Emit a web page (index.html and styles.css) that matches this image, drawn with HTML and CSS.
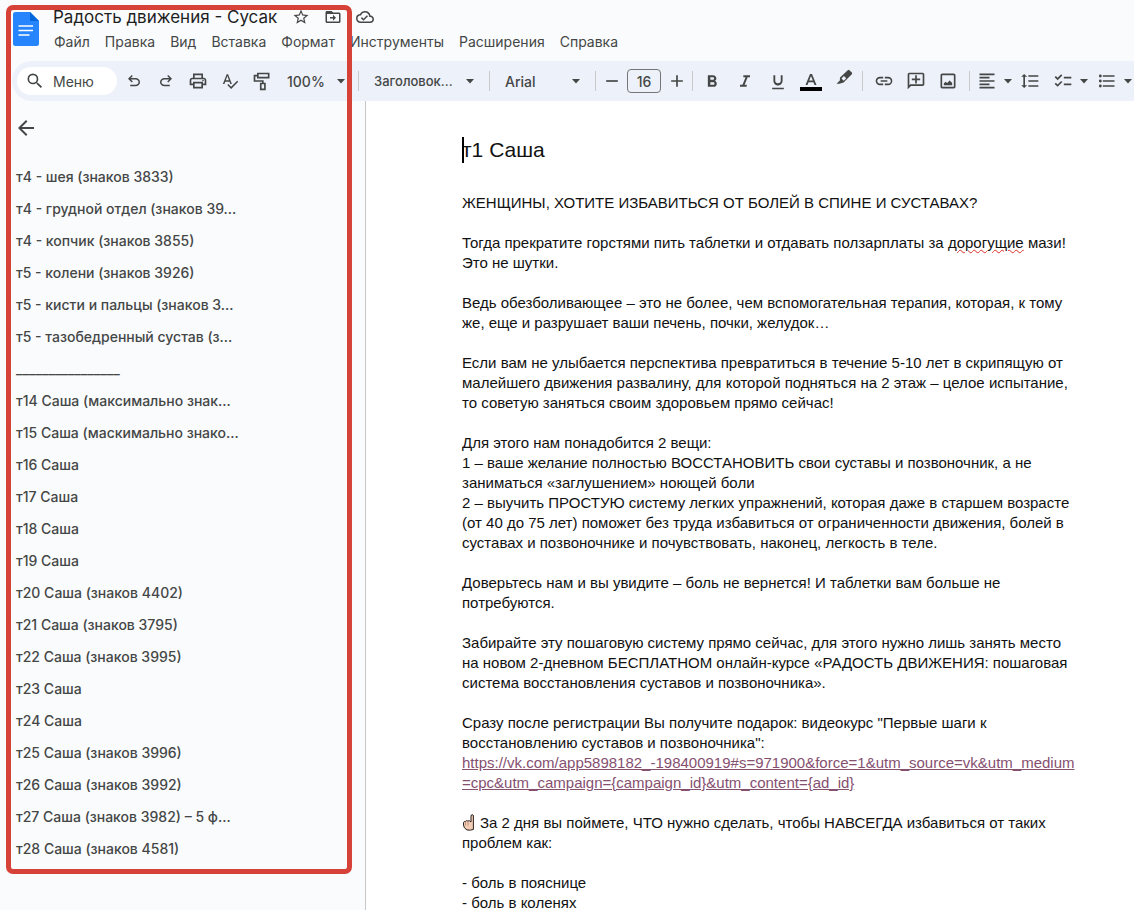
FILE: index.html
```html
<!DOCTYPE html>
<html lang="ru">
<head>
    <meta charset="utf-8">
    <title>Радость движения - Сусак</title>
    <link rel="stylesheet" href="styles.css">
</head>
<body>
    <div class="app">
        <header class="header">
            <svg class="logo" viewBox="0 0 26 34">
                <path fill="#2684fc" d="M2.500 0H17l9 9v22.500a2.500 2.500 0 0 1-2.500 2.500h-21A2.500 2.500 0 0 1 0 31.500v-29A2.500 2.500 0 0 1 2.500 0z"/>
                <path fill="#0066da" d="M17 0l9 9h-9z"/>
                <path stroke="#fff" stroke-width="1.600" d="M5.500 14h14.500M5.500 18.500h14.500M5.500 23h11"/>
            </svg>
            <div class="header-main">
                <div class="title-row">
                    <h1 class="doc-name">Радость движения - Сусак</h1>
                    <button class="title-btn" aria-label="Пометить"><svg class="icon-small" viewBox="0 0 24 24"><path d="M22 9.240l-7.190-.620L12 2 9.190 8.630 2 9.240l5.460 4.730L5.820 21 12 17.270 18.180 21l-1.630-7.030L22 9.240zM12 15.400l-3.760 2.270 1-4.280-3.320-2.880 4.380-.380L12 6.100l1.710 4.040 4.380.380-3.320 2.880 1 4.280L12 15.400z"/></svg></button>
                    <button class="title-btn" aria-label="Переместить"><svg class="icon-small" viewBox="0 0 24 24"><path d="M20 6h-8l-2-2H4c-1.100 0-2 .9-2 2v12c0 1.100.9 2 2 2h16c1.100 0 2-.9 2-2V8c0-1.100-.9-2-2-2zm0 12H4V8h16v10zm-8-1l4-4-4-4v3H8v2h4v3z"/><path d="M3 5h8l2 3H3z"/></svg></button>
                    <button class="title-btn" aria-label="Сохранено"><svg class="icon-small" viewBox="0 0 24 24"><path d="M19.350 10.040A7.490 7.490 0 0 0 12 4C9.110 4 6.600 5.640 5.350 8.040A5.994 5.994 0 0 0 0 14c0 3.310 2.690 6 6 6h13c2.760 0 5-2.240 5-5 0-2.640-2.050-4.780-4.650-4.960zM19 18H6c-2.210 0-4-1.790-4-4 0-2.050 1.530-3.760 3.560-3.970l1.070-.110.5-.950A5.469 5.469 0 0 1 12 6c2.620 0 4.880 1.860 5.390 4.430l.3 1.500 1.530.110A2.980 2.980 0 0 1 22 15c0 1.650-1.350 3-3 3zm-9-3.820l-2.090-2.090L6.500 13.500 10 17l6.010-6.010-1.410-1.410z"/></svg></button>
                </div>
                <nav class="menu">
                    <button>Файл</button>
                    <button>Правка</button>
                    <button>Вид</button>
                    <button>Вставка</button>
                    <button>Формат</button>
                    <button>Инструменты</button>
                    <button>Расширения</button>
                    <button>Справка</button>
                </nav>
            </div>
        </header>

        <div class="toolbar">
            <label class="search">
                <svg class="icon" viewBox="0 0 24 24"><path d="M15.500 14h-.790l-.280-.270A6.471 6.471 0 0 0 16 9.500 6.500 6.500 0 1 0 9.500 16c1.610 0 3.090-.590 4.230-1.570l.270.280v.790l5 4.990L20.490 19l-4.990-5zm-6 0a4.500 4.500 0 1 1 0-9 4.500 4.500 0 0 1 0 9z"/></svg>
                <input type="text" placeholder="Меню" aria-label="Меню">
            </label>
            <button class="tool" aria-label="Отменить"><svg class="icon-small" viewBox="0 0 24 24"><path d="M7 19v-2h7.100q1.575 0 2.738-1T18 13.500 16.838 11 14.100 10H7.800l2.600 2.600L9 14 4 9l5-5 1.400 1.400L7.800 8h6.300q2.425 0 4.163 1.575T20 13.500t-1.737 3.925T14.100 19z"/></svg></button>
            <button class="tool" aria-label="Повторить"><svg class="icon-small" viewBox="0 0 24 24"><path d="M9.900 19q-2.425 0-4.162-1.575T4 13.500t1.738-3.925T9.900 8h6.300l-2.600-2.600L15 4l5 5-5 5-1.400-1.400 2.600-2.600H9.900q-1.575 0-2.737 1T6 13.500 7.163 16 9.900 17H17v2z"/></svg></button>
            <button class="tool" aria-label="Печать"><svg class="icon" viewBox="0 0 24 24"><path d="M19 8h-1V3H6v5H5c-1.660 0-3 1.340-3 3v6h4v4h12v-4h4v-6c0-1.660-1.340-3-3-3zM8 5h8v3H8V5zm8 12v2H8v-4h8v2zm2-2v-2H6v2H4v-4c0-.550.450-1 1-1h14c.550 0 1 .450 1 1v4h-2z"/><circle cx="18" cy="11.500" r="1"/></svg></button>
            <button class="tool" aria-label="Правописание"><svg class="icon-small" viewBox="0 0 24 24"><path d="M12.450 16h2.090L9.430 3H7.570L2.460 16h2.090l1.120-3h5.640l1.140 3zm-6.020-5L8.500 5.480 10.570 11H6.430zm15.160.590l-8.090 8.090L9.830 16l-1.410 1.410 5.090 5.090L23 13l-1.410-1.410z"/></svg></button>
            <button class="tool" aria-label="Копировать форматирование"><svg class="icon" viewBox="0 0 24 24"><path fill="none" stroke="currentColor" stroke-width="2" d="M7 3h13v5H7zM7 5.500H3V12h10v3M10.500 15h5v7h-5z"/></svg></button>
            <div class="picker zoom">
                <select aria-label="Масштаб"><option>100%</option></select>
                <svg class="caret" viewBox="0 0 8 5"><path d="M0 0h8L4 4.500z"/></svg>
            </div>
            <span class="sep"></span>
            <div class="picker style">
                <select aria-label="Стиль"><option>Заголовок...</option></select>
                <svg class="caret" viewBox="0 0 8 5"><path d="M0 0h8L4 4.500z"/></svg>
            </div>
            <span class="sep"></span>
            <div class="picker font">
                <select aria-label="Шрифт"><option>Arial</option></select>
                <svg class="caret" viewBox="0 0 8 5"><path d="M0 0h8L4 4.500z"/></svg>
            </div>
            <span class="sep"></span>
            <button class="tool step" aria-label="Уменьшить шрифт"><svg class="icon" viewBox="0 0 24 24"><path d="M5 11h14v2H5z"/></svg></button>
            <input class="size" type="text" value="16" aria-label="Размер шрифта">
            <button class="tool step" aria-label="Увеличить шрифт"><svg class="icon" viewBox="0 0 24 24"><path d="M19 13h-6v6h-2v-6H5v-2h6V5h2v6h6v2z"/></svg></button>
            <span class="sep"></span>
            <div class="tools text-tools">
                <button class="tool" aria-label="Полужирный"><svg class="icon" viewBox="0 0 24 24"><path d="M15.600 11.790c.970-.670 1.650-1.770 1.650-2.790 0-2.260-1.750-4-4-4H7v14h7.040c2.090 0 3.710-1.700 3.710-3.790 0-1.520-.860-2.820-2.150-3.420zM10 7.500h3c.830 0 1.500.670 1.500 1.500s-.670 1.500-1.500 1.500h-3v-3zm3.500 9H10v-3h3.500c.830 0 1.500.670 1.500 1.500s-.670 1.500-1.500 1.500z"/></svg></button>
                <button class="tool" aria-label="Курсив"><svg class="icon" viewBox="0 0 24 24"><path d="M10 5v2.500h2.700L9 16.500H6V19h8v-2.500h-2.500l3.700-9H18V5z"/></svg></button>
                <button class="tool" aria-label="Подчеркнутый"><svg class="icon" viewBox="0 0 24 24"><path d="M12 17.500c3.310 0 5.500-2.690 5.500-6V5h-2.200v6.500a3.300 3.300 0 0 1-6.600 0V5H6.500v6.500c0 3.310 2.190 6 5.500 6zM5 20v2h14v-2H5z"/></svg></button>
                <button class="tool" aria-label="Цвет текста"><svg class="color-icon" viewBox="0 0 22 20"><path d="M10 3h2l4.500 11h-2l-1.100-2.800H8.600L7.500 14h-2zM9.200 9.600h3.600L11 5z"/><path fill="#000" d="M0 16h22v4H0z"/></svg></button>
                <button class="tool" aria-label="Цвет выделения"><svg class="icon raised" viewBox="0 0 24 24"><path fill-rule="evenodd" d="M16.500 2.600q1-.9 2 0l2.900 2.900q.9 1 0 2l-9.900 10-5 1.500H3l4-4 .2-3.500zM9 12.500l2.700 2.700 3-3-2.800-2.700z"/></svg></button>
            </div>
            <span class="sep"></span>
            <div class="tools">
                <button class="tool" aria-label="Ссылка"><svg class="icon" viewBox="0 0 24 24"><path d="M3.900 12c0-1.710 1.390-3.100 3.100-3.100h4V7H7a5 5 0 0 0 0 10h4v-1.900H7c-1.710 0-3.100-1.390-3.100-3.100zM8 13h8v-2H8v2zm9-6h-4v1.900h4a3.100 3.100 0 0 1 0 6.200h-4V17h4a5 5 0 0 0 0-10z"/></svg></button>
                <button class="tool" aria-label="Комментарий"><svg class="icon" viewBox="0 0 24 24"><path d="M4 2h16c1.100 0 2 .9 2 2v12c0 1.100-.9 2-2 2H6l-4 4V4c0-1.100.9-2 2-2zm0 15l1-1h15V4H4zM11 5h2v4h4v2h-4v4h-2v-4H7V9h4z"/></svg></button>
                <button class="tool" aria-label="Изображение"><svg class="icon" viewBox="0 0 24 24"><path d="M19 5v14H5V5h14m0-2H5c-1.100 0-2 .9-2 2v14c0 1.100.9 2 2 2h14c1.100 0 2-.9 2-2V5c0-1.100-.9-2-2-2z"/><path d="M7 17v-2l2-2 2 1.500 3-3 3 3V17z"/></svg></button>
            </div>
            <span class="sep"></span>
            <button class="tool wide" aria-label="Выравнивание">
                <svg class="icon" viewBox="0 0 24 24"><path d="M15 15H3v2h12v-2zm0-8H3v2h12V7zM3 13h18v-2H3v2zm0 8h18v-2H3v2zM3 3v2h18V3H3z"/></svg>
                <svg class="caret" viewBox="0 0 8 5"><path d="M0 0h8L4 4.500z"/></svg>
            </button>
            <button class="tool" aria-label="Интервал"><svg class="icon" viewBox="0 0 24 24"><path d="M6 7h2.500L5 3.500 1.500 7H4v10H1.500L5 20.500 8.500 17H6V7zm4-2v2h12V5H10zm0 14h12v-2H10v2zm0-6h12v-2H10v2z"/></svg></button>
            <button class="tool wide" aria-label="Контрольный список">
                <svg class="icon" viewBox="0 0 24 24"><path d="M22 7h-9v2h9V7zm0 8h-9v2h9v-2zM5.540 11L2 7.460l1.410-1.410 2.120 2.120 4.240-4.240 1.410 1.410L5.540 11zm0 8L2 15.460l1.410-1.410 2.120 2.120 4.240-4.240 1.410 1.410L5.540 19z"/></svg>
                <svg class="caret" viewBox="0 0 8 5"><path d="M0 0h8L4 4.500z"/></svg>
            </button>
            <button class="tool wide" aria-label="Маркированный список">
                <svg class="icon" viewBox="0 0 24 24"><path d="M7 5h14v2H7zM7 11h14v2H7zM7 17h14v2H7z"/><circle cx="4" cy="6" r="1.700"/><circle cx="4" cy="12" r="1.700"/><circle cx="4" cy="18" r="1.700"/></svg>
                <svg class="caret" viewBox="0 0 8 5"><path d="M0 0h8L4 4.500z"/></svg>
            </button>
        </div>

        <div class="content">
            <aside class="outline">
                <button class="back" aria-label="Закрыть структуру"><svg class="back-icon" viewBox="0 0 24 24"><path d="M20 11H7.830l5.590-5.590L12 4l-8 8 8 8 1.410-1.410L7.830 13H20v-2z"/></svg></button>
                <nav class="outline-list">
                    <a href="#">т4 - шея (знаков 3833)</a>
                    <a href="#">т4 - грудной отдел (знаков 39...</a>
                    <a href="#">т4 - копчик (знаков 3855)</a>
                    <a href="#">т5 - колени (знаков 3926)</a>
                    <a href="#">т5 - кисти и пальцы (знаков 3...</a>
                    <a href="#">т5 - тазобедренный сустав (з...</a>
                    <a href="#">________________</a>
                    <a href="#">т14 Саша (максимально знак...</a>
                    <a href="#">т15 Саша (маскимально знако...</a>
                    <a href="#">т16 Саша</a>
                    <a href="#">т17 Саша</a>
                    <a href="#">т18 Саша</a>
                    <a href="#">т19 Саша</a>
                    <a href="#">т20 Саша (знаков 4402)</a>
                    <a href="#">т21 Саша (знаков 3795)</a>
                    <a href="#">т22 Саша (знаков 3995)</a>
                    <a href="#">т23 Саша</a>
                    <a href="#">т24 Саша</a>
                    <a href="#">т25 Саша (знаков 3996)</a>
                    <a href="#">т26 Саша (знаков 3992)</a>
                    <a href="#">т27 Саша (знаков 3982) – 5 ф...</a>
                    <a href="#">т28 Саша (знаков 4581)</a>
                </nav>
            </aside>

            <main class="page">
                <h2><span class="cursor"></span>т1 Саша</h2>
                <p>ЖЕНЩИНЫ, ХОТИТЕ ИЗБАВИТЬСЯ ОТ БОЛЕЙ В СПИНЕ И СУСТАВАХ?</p>
                <p>Тогда прекратите горстями пить таблетки и отдавать ползарплаты за <span class="typo">дорогущие</span> мази!<br>
                Это не шутки.</p>
                <p>Ведь обезболивающее – это не более, чем вспомогательная терапия, которая, к тому<br>
                же, еще и разрушает ваши печень, почки, желудок…</p>
                <p>Если вам не улыбается перспектива превратиться в течение 5-10 лет в скрипящую от<br>
                малейшего движения развалину, для которой подняться на 2 этаж – целое испытание,<br>
                то советую заняться своим здоровьем прямо сейчас!</p>
                <p>Для этого нам понадобится 2 вещи:<br>
                1 – ваше желание полностью ВОССТАНОВИТЬ свои суставы и позвоночник, а не<br>
                заниматься «заглушением» ноющей боли<br>
                2 – выучить ПРОСТУЮ систему легких упражнений, которая даже в старшем возрасте<br>
                (от 40 до 75 лет) поможет без труда избавиться от ограниченности движения, болей в<br>
                суставах и позвоночнике и почувствовать, наконец, легкость в теле.</p>
                <p>Доверьтесь нам и вы увидите – боль не вернется! И таблетки вам больше не<br>
                потребуются.</p>
                <p>Забирайте эту пошаговую систему прямо сейчас, для этого нужно лишь занять место<br>
                на новом 2-дневном БЕСПЛАТНОМ онлайн-курсе «РАДОСТЬ ДВИЖЕНИЯ: пошаговая<br>
                система восстановления суставов и позвоночника».</p>
                <p>Сразу после регистрации Вы получите подарок: видеокурс "Первые шаги к<br>
                восстановлению суставов и позвоночника":<br>
                <a href="#">https://vk.com/app5898182_-198400919#s=971900&amp;force=1&amp;utm_source=vk&amp;utm_medium<br>=cpc&amp;utm_campaign={campaign_id}&amp;utm_content={ad_id}</a></p>
                <p><svg class="finger" viewBox="0 0 14 17"><path fill="#f3cdb5" stroke="#2b211d" d="M9 8V2q0-1.300 1.200-1.300T11.400 2v13.500q-3 1-6.400.5Q1.500 14 1.500 11V8.500q.5-1.200 1.800-1 1-1.500 2.400-.5Q7.500 6 9 8z"/><path fill="none" stroke="#a77c66" stroke-width=".7" d="M3.500 8v3.500M6 7.500v4"/></svg>За 2 дня вы поймете, ЧТО нужно сделать, чтобы НАВСЕГДА избавиться от таких<br>
                проблем как:</p>
                <p>- боль в пояснице<br>
                - боль в коленях</p>
            </main>
        </div>
        <div class="highlight"></div>
    </div>
</body>
</html>
```
FILE: styles.css
```css
* {
    box-sizing: border-box;
}

body {
    margin: 0;
    background-color: #fafbfd;
    font-family: Inter, "Liberation Sans", sans-serif;
    color: #444746;
}

button, input, select {
    margin: 0;
    padding: 0;
    border: none;
    background: none;
    font: inherit;
    color: inherit;
}

svg {
    display: block;
    flex: none;
    fill: currentColor;
}

.app {
    position: relative;
    display: flex;
    flex-direction: column;
    height: 100vh;
    overflow: hidden;
}

/* header */
.header {
    display: flex;
    gap: 14px;
    padding: 5px 13px 8px;
}

.logo {
    width: 26px;
    height: 34px;
    margin-top: 7px;
}

.title-row {
    display: flex;
    align-items: center;
    height: 24px;
}

.doc-name {
    margin: 0 8px 0 0;
    font-size: 17px;
    font-weight: 400;
    color: #1f1f1f;
}

.title-btn {
    display: flex;
    justify-content: center;
    width: 32px;
}

.icon-small {
    width: 18px;
    height: 18px;
}

.menu {
    display: flex;
    gap: 15px;
    height: 24px;
    padding-left: 1px;
    font-size: 14px;
}

/* toolbar */
.toolbar {
    display: flex;
    align-items: center;
    flex: none;
    height: 40px;
    margin-left: 12px;
    padding-left: 5px;
    border-radius: 20px 0 0 20px;
    background-color: #edf1fa;
    font-size: 14px;
    font-weight: 500;
}

.search {
    display: flex;
    align-items: center;
    gap: 8px;
    width: 100px;
    height: 28px;
    margin-right: 1px;
    padding-left: 8px;
    border-radius: 14px;
    background-color: #fff;
    font-weight: 400;
}

.search input {
    width: 60px;
}

.search input::placeholder {
    color: #444746;
    opacity: 1;
}

.tool {
    display: flex;
    align-items: center;
    justify-content: center;
    flex: none;
    width: 32px;
    height: 28px;
}

.icon {
    width: 20px;
    height: 20px;
}

.color-icon {
    width: 22px;
    height: 20px;
}

.raised {
    margin-bottom: 6px;
}

.step {
    width: 31px;
}

.wide {
    justify-content: flex-start;
    gap: 7px;
    width: 44px;
    padding-left: 7px;
}

.caret {
    width: 8px;
    height: 5px;
}

.tools {
    display: flex;
    margin: 0 5px;
}

.text-tools {
    margin: 0 2px;
}

.text-tools .tool {
    width: 33px;
}

.sep {
    flex: none;
    width: 1px;
    height: 20px;
    background-color: #c7c9cc;
}

.picker {
    position: relative;
    flex: none;
}

.picker select {
    width: 100%;
    height: 28px;
    padding-left: 15px;
    appearance: none;
}

.picker .caret {
    position: absolute;
    top: 12px;
    right: 15px;
    pointer-events: none;
}

.zoom {
    width: 80px;
}

.zoom select {
    padding-left: 9px;
}

.zoom .caret {
    right: 13px;
}

.style {
    width: 130px;
    font-size: 13px;
}

.font {
    width: 105px;
}

.size {
    flex: none;
    width: 34px;
    height: 24px;
    border: 1px solid #747775;
    border-radius: 4px;
    text-align: center;
}

/* outline and page */
.content {
    display: flex;
    flex: 1;
    min-height: 0;
}

.outline {
    flex: none;
    width: 366px;
    padding: 15px 16px;
    border-right: 1px solid #c7c7c7;
}

.back {
    display: block;
}

.back-icon {
    width: 24px;
    height: 24px;
    margin-left: -2px;
}

.outline-list {
    display: flex;
    flex-direction: column;
    margin-top: 21px;
}

.outline-list a {
    font-size: 14px;
    font-weight: 500;
    line-height: 32px;
    color: #444746;
    text-decoration: none;
}

.page {
    flex: 1;
    padding: 34px 0 0 96px;
    background-color: #fff;
    font-family: "Liberation Sans", Arial, sans-serif;
    font-size: 15px;
    line-height: 20px;
    white-space: nowrap;
    color: #111;
}

.page h2 {
    position: relative;
    margin: 0 0 28px;
    font-size: 21px;
    font-weight: 400;
    line-height: 30px;
}

.page p {
    margin: 0 0 20px;
}

.page a {
    color: #855070;
}

.cursor {
    position: absolute;
    top: 2px;
    left: 0;
    width: 2px;
    height: 26px;
    background-color: #000;
}

.typo {
    text-decoration: underline wavy #d93025 1px;
}

.finger {
    display: inline-block;
    width: 14px;
    height: 17px;
    margin-right: 4px;
    vertical-align: -3px;
}

/* red frame over the outline */
.highlight {
    position: absolute;
    top: 5px;
    left: 6px;
    width: 346px;
    height: 869px;
    border: 5px solid #d64237;
    border-radius: 7px;
    pointer-events: none;
}
```
